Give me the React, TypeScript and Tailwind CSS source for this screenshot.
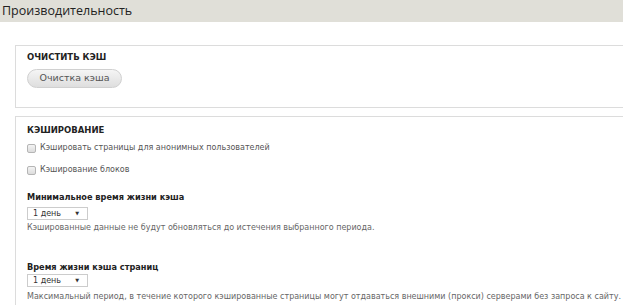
import React from "react";

const font = { fontFamily: '"DejaVu Sans", Verdana, sans-serif' };

function Checkbox({ label }: { label: string }) {
  return (
    <label className="h-[10px] flex items-center gap-[4px] text-[8px] leading-[10px] text-[#555]">
      <span className="w-[9px] h-[9px] rounded-[2px] border border-[#b5b5b5] bg-gradient-to-b from-[#f4f4f4] to-[#dcdcdc]" />
      {label}
    </label>
  );
}

function Select() {
  return (
    <div className="w-[61px] h-[13px] border border-[#ccc] bg-white flex items-center justify-between pl-[5px] pr-[8px] text-[8px] text-[#333]">
      <span>1 день</span>
      <span className="text-[5px]">▼</span>
    </div>
  );
}

export default function App() {
  return (
    <div className="w-[623px] h-[305px] bg-white overflow-hidden" style={font}>
      <div className="h-[22px] bg-[#e0dfd8] flex items-center pl-[2px]">
        <h1 className="text-[12.5px] text-[#222] leading-none font-['Open_Sans',sans-serif]">Производительность</h1>
      </div>

      <div className="pl-[15px] pt-[23px]">
        <fieldset className="h-[63px] border border-r-0 border-[#dcdcdc] pl-[11px] pt-[6px]">
          <div className="text-[8.5px] font-bold text-[#222] uppercase leading-[10px]">Очистить кэш</div>
          <button className="mt-[7px] w-[95px] h-[19px] rounded-full border border-[#d0d0d0] bg-gradient-to-b from-[#f5f5f5] to-[#dedede] text-[9.5px] text-[#555]">
            Очистка кэша
          </button>
        </fieldset>

        <fieldset className="mt-[8px] h-[200px] border border-r-0 border-b-0 border-[#dcdcdc] pl-[11px] pt-[8px]">
          <div className="text-[8.5px] font-bold text-[#222] uppercase leading-[10px]">Кэширование</div>
          <div className="mt-[8px] flex flex-col gap-[12px]">
            <Checkbox label="Кэшировать страницы для анонимных пользователей" />
            <Checkbox label="Кэширование блоков" />
          </div>

          <div className="mt-[17px] text-[8.2px] font-bold text-[#222] leading-[10px]">Минимальное время жизни кэша</div>
          <div className="mt-[5px]">
            <Select />
          </div>
          <p className="mt-[3px] text-[8px] text-[#666] leading-[10px]">
            Кэшированные данные не будут обновляться до истечения выбранного периода.
          </p>

          <div className="mt-[29px] text-[8.2px] font-bold text-[#222] leading-[10px]">Время жизни кэша страниц</div>
          <div className="mt-[2px]">
            <Select />
          </div>
          <p className="mt-[5px] text-[8px] text-[#666] leading-[10px] whitespace-nowrap">
            Максимальный период, в течение которого кэшированные страницы могут отдаваться внешними (прокси) серверами без запроса к сайту.
          </p>
        </fieldset>
      </div>
    </div>
  );
}
